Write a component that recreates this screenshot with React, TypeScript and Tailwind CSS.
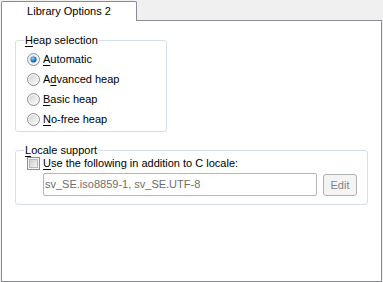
import React from "react";

const font = { fontFamily: '"Liberation Sans", Arial, sans-serif' };

function Radio({ checked }: { checked?: boolean }) {
  return (
    <svg width="13" height="13" viewBox="0 0 13 13" className="shrink-0">
      <defs>
        <linearGradient id="rg" x1="0" y1="0" x2="1" y2="1">
          <stop offset="0" stopColor="#d4d4d4" />
          <stop offset="1" stopColor="#fbfbfb" />
        </linearGradient>
        <radialGradient id="rd" cx="0.4" cy="0.35" r="0.7">
          <stop offset="0" stopColor="#8fd6ff" />
          <stop offset="0.5" stopColor="#2a8ad4" />
          <stop offset="1" stopColor="#0b3f74" />
        </radialGradient>
      </defs>
      <circle cx="6.5" cy="6.5" r="6" fill="#f4f4f4" stroke="#8e8f8f" strokeWidth="1" />
      <circle cx="6.5" cy="6.5" r="4.3" fill="url(#rg)" />
      {checked && <circle cx="6.5" cy="6.5" r="3" fill="url(#rd)" />}
    </svg>
  );
}

function Check() {
  return (
    <svg width="13" height="13" viewBox="0 0 13 13" className="shrink-0">
      <defs>
        <linearGradient id="cg" x1="0" y1="0" x2="1" y2="1">
          <stop offset="0" stopColor="#cbcbcb" />
          <stop offset="1" stopColor="#f7f7f7" />
        </linearGradient>
      </defs>
      <rect x="0.5" y="0.5" width="12" height="12" fill="#f4f4f4" stroke="#8e8f8f" />
      <rect x="2.5" y="2.5" width="8" height="8" fill="url(#cg)" stroke="#b8b8b8" />
    </svg>
  );
}

function U({ c }: { c: string }) {
  return <span className="underline underline-offset-[2px]">{c}</span>;
}

function RadioRow({ checked, children }: { checked?: boolean; children: React.ReactNode }) {
  return (
    <div className="flex h-[20px] items-center pl-[3px]">
      <Radio checked={checked} />
      <span className="ml-[3px] text-[11px] leading-[13px] text-black">{children}</span>
    </div>
  );
}

export default function App() {
  return (
    <div className="w-[383px] h-[282px] bg-[#f0f0f0] pl-px pt-px pr-px flex flex-col" style={font}>
      <div className="flex h-[20px]">
        <div className="w-[136px] h-[20px] bg-white border-l border-t border-r border-[#898c95] rounded-t-[2px] flex items-center justify-center text-[11px] leading-[13px] text-black">
          Library Options 2
        </div>
        <div className="flex-1 border-b border-[#898c95]" />
      </div>
      <div className="flex-1 bg-white border-l border-r border-b border-[#898c95] pl-[13px] pt-[13px]">
        <fieldset className="w-[152px] border border-[#d5dfe5] rounded-[3px] px-[8px] pt-[2px] pb-[2px]">
          <legend className="px-px text-[11px] leading-[13px] text-black">
            <U c="H" />eap selection
          </legend>
          <RadioRow checked>
            <U c="A" />utomatic
          </RadioRow>
          <RadioRow>
            A<U c="d" />vanced heap
          </RadioRow>
          <RadioRow>
            <U c="B" />asic heap
          </RadioRow>
          <RadioRow>
            <U c="N" />o-free heap
          </RadioRow>
        </fieldset>
        <fieldset className="mt-[12px] w-[353px] border border-[#d5dfe5] rounded-[3px] px-[8px] pt-0 pb-[8px]">
          <legend className="px-px text-[11px] leading-[13px] text-black">
            <U c="L" />ocale support
          </legend>
          <div className="flex h-[13px] items-center pl-[3px]">
            <Check />
            <span className="ml-[3px] text-[11px] leading-[13px] text-black">
              <U c="U" />se the following in addition to C locale:
            </span>
          </div>
          <div className="flex mt-[3px] ml-[19px]">
            <div className="w-[274px] h-[23px] border border-[#b5b7bb] rounded-[2px] flex items-center pl-[1px] text-[11px] leading-[13px] text-[#6d6d6d]">
              sv_SE.iso8859-1, sv_SE.UTF-8
            </div>
            <div className="ml-[6px] mt-[1px] w-[34px] h-[22px] border border-[#adb2b5] rounded-[3px] bg-[#f4f4f4] flex items-center justify-center text-[11px] leading-[13px] text-[#838383]">
              Edit
            </div>
          </div>
        </fieldset>
      </div>
    </div>
  );
}
